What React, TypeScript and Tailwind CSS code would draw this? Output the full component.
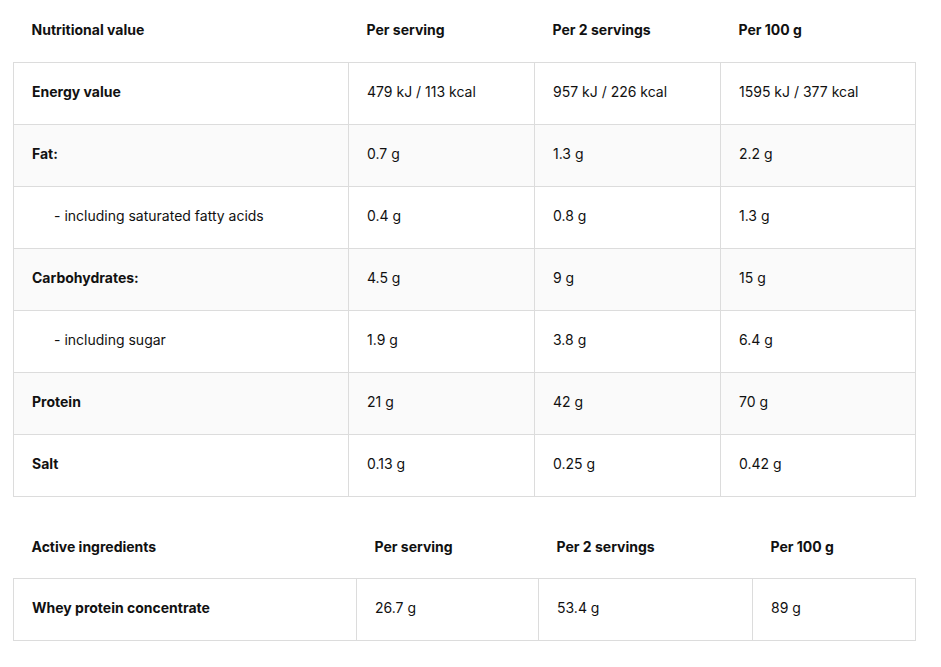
import React from "react";

type Row = { label: string; vals: string[]; bold: boolean; indent?: boolean };

const rows: Row[] = [
  { label: "Energy value", vals: ["479 kJ / 113 kcal", "957 kJ / 226 kcal", "1595 kJ / 377 kcal"], bold: true },
  { label: "Fat:", vals: ["0.7 g", "1.3 g", "2.2 g"], bold: true },
  { label: "- including saturated fatty acids", vals: ["0.4 g", "0.8 g", "1.3 g"], bold: false, indent: true },
  { label: "Carbohydrates:", vals: ["4.5 g", "9 g", "15 g"], bold: true },
  { label: "- including sugar", vals: ["1.9 g", "3.8 g", "6.4 g"], bold: false, indent: true },
  { label: "Protein", vals: ["21 g", "42 g", "70 g"], bold: true },
  { label: "Salt", vals: ["0.13 g", "0.25 g", "0.42 g"], bold: true },
];

function Table({
  head,
  body,
  widths,
}: {
  head: string[];
  body: Row[];
  widths: string[];
}) {
  return (
    <table className="border-collapse table-fixed w-[902px] text-[14px] text-[#111]">
      <colgroup>
        {widths.map((w, i) => (
          <col key={i} className={w} />
        ))}
      </colgroup>
      <thead>
        <tr className="h-[62px]">
          {head.map((h, i) => (
            <th key={i} className="text-left font-bold px-[18px] pb-[2px] align-middle">
              {h}
            </th>
          ))}
        </tr>
      </thead>
      <tbody>
        {body.map((r, i) => (
          <tr key={i} className={`h-[62px] ${i % 2 === 1 ? "bg-[#fafafa]" : "bg-white"}`}>
            <td
              className={`border border-[#dcdcdc] px-[18px] pb-[4px] align-middle ${r.bold ? "font-bold" : "font-normal"} ${r.indent ? "pl-[40px]" : ""}`}
            >
              {r.label}
            </td>
            {r.vals.map((v, j) => (
              <td key={j} className="border border-[#dcdcdc] px-[18px] pb-[4px] align-middle">
                {v}
              </td>
            ))}
          </tr>
        ))}
      </tbody>
    </table>
  );
}

export default function App() {
  return (
    <div className="bg-white min-h-[667px] w-[941px] pl-[13px]" style={{ fontFamily: "Inter, 'Liberation Sans', sans-serif" }}>
      <Table
        head={["Nutritional value", "Per serving", "Per 2 servings", "Per 100 g"]}
        body={rows}
        widths={["w-[335px]", "w-[186px]", "w-[186px]", "w-[195px]"]}
      />
      <div className="h-[20px]" />
      <Table
        head={["Active ingredients", "Per serving", "Per 2 servings", "Per 100 g"]}
        body={[{ label: "Whey protein concentrate", vals: ["26.7 g", "53.4 g", "89 g"], bold: true }]}
        widths={["w-[343px]", "w-[182px]", "w-[214px]", "w-[163px]"]}
      />
    </div>
  );
}
